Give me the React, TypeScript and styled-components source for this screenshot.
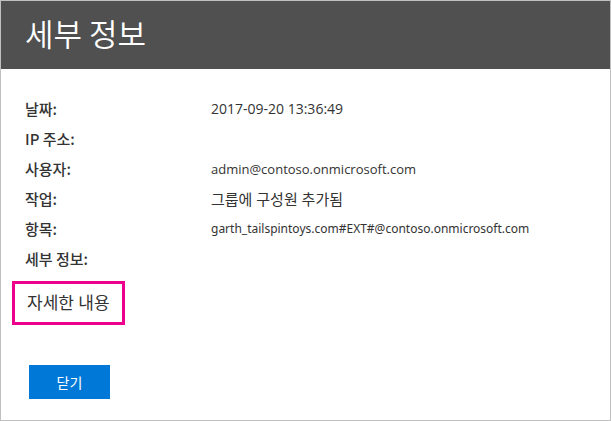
import React from "react";
import styled, { createGlobalStyle } from "styled-components";

const GlobalStyle = createGlobalStyle`
  *, *::before, *::after { box-sizing: border-box; }
  body {
    margin: 0;
    background: #fff;
    color: #333;
    font-family: "Open Sans", "Noto Sans CJK KR", sans-serif;
  }
`;

const Dialog = styled.main`
  display: flex;
  flex-direction: column;
  min-height: 100vh;
  border: 1px solid #c0c0c0;
`;

const Header = styled.header`
  padding: 12px 24px 16px;
  background: #505050;
`;

const Title = styled.h1`
  margin: 0;
  color: #fff;
  font-family: "Noto Sans CJK KR", sans-serif;
  font-size: 31px;
  font-weight: 350;
  line-height: 40px;
`;

const Details = styled.dl`
  display: grid;
  grid-template-columns: 186px 1fr;
  grid-auto-rows: 30px;
  align-items: center;
  margin: 0;
  padding: 25px 24px 0;
  line-height: 20px;
`;

const Label = styled.dt`
  font-family: "Noto Sans CJK KR", sans-serif;
  font-size: 15px;
  font-weight: 500;
`;

const Value = styled.dd<{ $size: number; $compact?: boolean }>`
  margin: 0;
  font-family: ${({ $compact }) => ($compact ? '"Noto Sans"' : '"Open Sans"')},
    "Noto Sans CJK KR", sans-serif;
  font-size: ${({ $size }) => $size}px;
`;

const MoreLink = styled.a`
  align-self: flex-start;
  margin: 7px 0 0 11px;
  padding: 6px 12px;
  border: 3px solid #ec008c;
  color: #333;
  font-size: 17px;
  line-height: 26px;
  text-decoration: none;
`;

const CloseButton = styled.button`
  align-self: flex-start;
  width: 81px;
  height: 34px;
  margin: 40px 0 0 28px;
  padding: 0;
  border: 0;
  background: #0078d7;
  color: #fff;
  font: inherit;
  font-size: 14px;
  cursor: pointer;
`;

const details: {
  label: string;
  value: string;
  size: number;
  compact?: boolean;
}[] = [
  { label: "날짜:", value: "2017-09-20 13:36:49", size: 14 },
  { label: "IP 주소:", value: "", size: 14 },
  { label: "사용자:", value: "admin@contoso.onmicrosoft.com", size: 13 },
  { label: "작업:", value: "그룹에 구성원 추가됨", size: 15 },
  {
    label: "항목:",
    value: "garth_tailspintoys.com#EXT#@contoso.onmicrosoft.com",
    size: 12,
    compact: true,
  },
  { label: "세부 정보:", value: "", size: 14 },
];

export default function App() {
  return (
    <>
      <GlobalStyle />
      <Dialog>
        <Header>
          <Title>세부 정보</Title>
        </Header>
        <Details>
          {details.map(({ label, value, size, compact }) => (
            <React.Fragment key={label}>
              <Label>{label}</Label>
              <Value $size={size} $compact={compact}>
                {value}
              </Value>
            </React.Fragment>
          ))}
        </Details>
        <MoreLink href="#details">자세한 내용</MoreLink>
        <CloseButton type="button">닫기</CloseButton>
      </Dialog>
    </>
  );
}
